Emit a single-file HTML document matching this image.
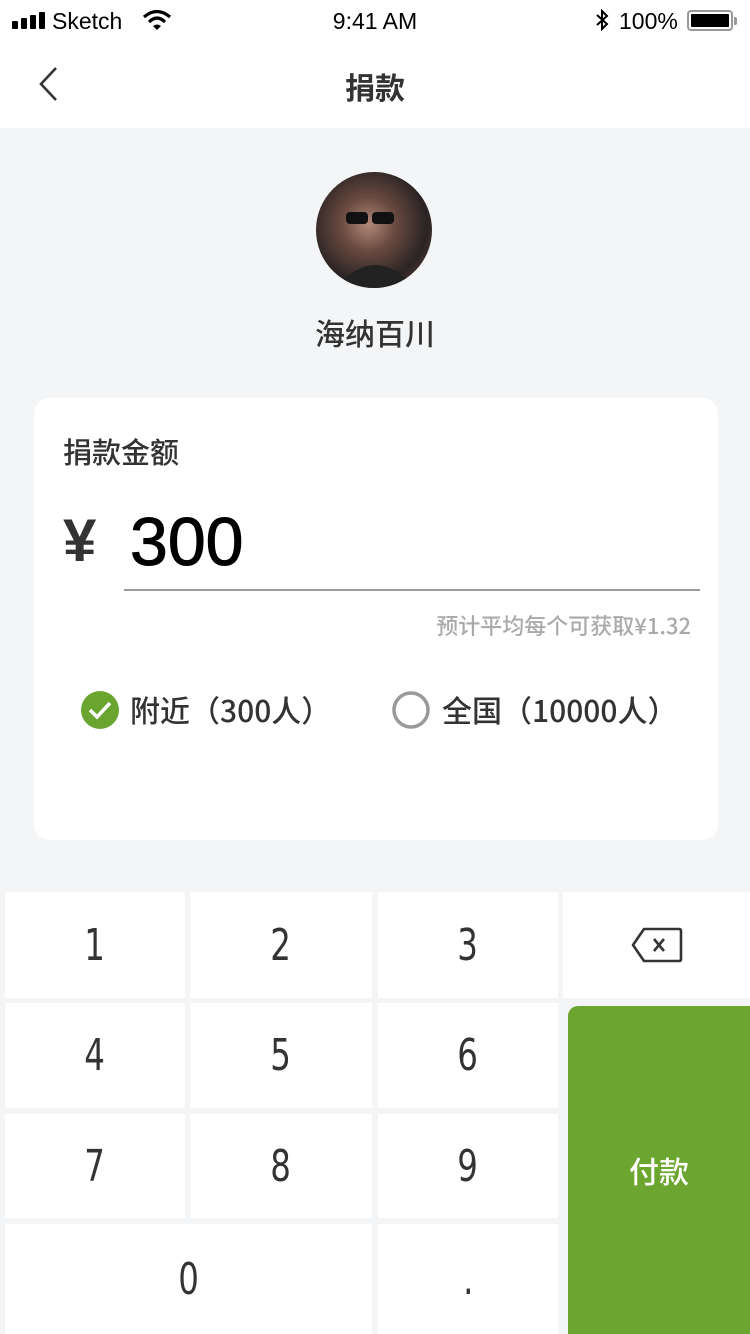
<!DOCTYPE html>
<html><head><meta charset="utf-8">
<style>
*{margin:0;padding:0;box-sizing:border-box}
body{width:750px;height:1334px;background:#f4f5f7;font-family:"Liberation Sans","Noto Sans CJK SC",sans-serif;position:relative;overflow:hidden;color:#333}
.abs{position:absolute}
.top{left:0;top:0;width:750px;height:128px;background:#fff}
.cj{font-family:"Noto Sans CJK SC",sans-serif;font-weight:500}
.key{position:absolute;background:#fff;display:flex;align-items:center;justify-content:center;font-size:44px;color:#333;font-family:"DejaVu Sans Condensed","Liberation Sans",sans-serif}
.key span{display:inline-block;transform:scaleX(0.82)}
</style></head><body>
<div class="abs top"></div>
<div class="abs" style="left:12px;top:12px;display:flex;align-items:flex-end;gap:3px">
<div style="width:6px;height:8px;background:#000;border-radius:1px"></div>
<div style="width:6px;height:11px;background:#000;border-radius:1px"></div>
<div style="width:6px;height:14px;background:#000;border-radius:1px"></div>
<div style="width:6px;height:17px;background:#000;border-radius:1px"></div>
</div>
<div class="abs" style="left:52px;top:8px;font-size:23px;color:#000">Sketch</div>
<svg class="abs" style="left:142px;top:9px" width="30" height="22" viewBox="0 0 30 22"><path d="M2 8 Q15 -3 28 8" stroke="#000" stroke-width="3.2" fill="none"/><path d="M7 13 Q15 5 23 13" stroke="#000" stroke-width="3.2" fill="none"/><path d="M11 17 L15 21 L19 17 Q15 14 11 17Z" fill="#000"/></svg>
<div class="abs" style="left:0;width:750px;top:8px;text-align:center;font-size:23px;color:#000">9:41 AM</div>
<svg class="abs" style="left:595px;top:9px" width="14" height="22" viewBox="0 0 14 22"><path d="M2 6 L12 15 L7 20 V2 L12 7 L2 16" stroke="#000" stroke-width="2" fill="none"/></svg>
<div class="abs" style="left:619px;top:8px;font-size:23px;color:#000">100%</div>
<div class="abs" style="left:687px;top:10px;width:46px;height:21px;border:2px solid #999;border-radius:4px;padding:2px"><div style="width:100%;height:100%;background:#000;border-radius:1px"></div></div>
<div class="abs" style="left:734px;top:17px;width:3px;height:8px;background:#999;border-radius:0 2px 2px 0"></div>
<svg class="abs" style="left:36px;top:66px" width="26" height="36" viewBox="0 0 26 36"><path d="M20 2 L5 18 L20 34" stroke="#333" stroke-width="2.6" fill="none"/></svg>
<div class="abs" style="left:0;width:750px;top:64px;text-align:center;font-size:30px;font-weight:bold;color:#333">捐款</div>
<div class="abs" style="left:316px;top:172px;width:116px;height:116px;border-radius:50%;background:radial-gradient(circle at 45% 45%,#b08878 0,#6a4a40 30%,#2a2424 65%,#7a4a40 100%);overflow:hidden">
<svg width="116" height="116"><rect x="30" y="40" width="22" height="12" rx="4" fill="#111"/><rect x="56" y="40" width="22" height="12" rx="4" fill="#111"/><path d="M20 116 Q58 70 100 116Z" fill="#222"/></svg></div>
<div class="abs cj" style="left:0;width:750px;top:310px;text-align:center;font-size:30px;color:#333">海纳百川</div>
<div class="abs" style="left:34px;top:398px;width:684px;height:442px;background:#fff;border-radius:16px"></div>
<div class="abs cj" style="left:63px;top:430px;font-size:29px;color:#333">捐款金额</div>
<div class="abs" style="left:63px;top:506px;font-size:60px;font-weight:bold;color:#333;line-height:70px">¥</div>
<div class="abs" style="left:130px;top:502px;font-size:68px;color:#000;line-height:80px;-webkit-text-stroke:1px #000">300</div>
<div class="abs" style="left:124px;top:589px;width:576px;height:2px;background:#9a9a9a"></div>
<div class="abs cj" style="right:59px;top:609px;font-size:22px;color:#aaa">预计平均每个可获取¥1.32</div>
<svg class="abs" style="left:80px;top:690px" width="40" height="40"><circle cx="20" cy="20" r="19" fill="#6aa530"/><path d="M10 20 L17 27 L30 13" stroke="#fff" stroke-width="3.5" fill="none"/></svg>
<div class="abs cj" style="left:130px;top:687px;font-size:30px;color:#333">附近（300人）</div>
<svg class="abs" style="left:392px;top:690px" width="40" height="40"><circle cx="19" cy="20" r="17" fill="none" stroke="#999" stroke-width="3.5"/></svg>
<div class="abs cj" style="left:442px;top:687px;font-size:30px;color:#333">全国（10000人）</div>
<div class="key" style="left:5px;top:892px;width:180px;height:106px"><span>1</span></div>
<div class="key" style="left:190px;top:892px;width:182px;height:106px"><span>2</span></div>
<div class="key" style="left:378px;top:892px;width:180px;height:106px"><span>3</span></div>
<div class="key" style="left:563px;top:892px;width:187px;height:106px"><svg width="52" height="36" viewBox="0 0 52 36"><path d="M13 2 H48 Q50 2 50 4 V32 Q50 34 48 34 H13 L2 18Z" stroke="#333" stroke-width="2.6" fill="none" stroke-linejoin="round"/><path d="M23 12 L33 24 M33 12 L23 24" stroke="#333" stroke-width="2.6"/></svg></div>
<div class="key" style="left:5px;top:1003px;width:180px;height:105px"><span>4</span></div>
<div class="key" style="left:190px;top:1003px;width:182px;height:105px"><span>5</span></div>
<div class="key" style="left:378px;top:1003px;width:180px;height:105px"><span>6</span></div>
<div class="key" style="left:5px;top:1114px;width:180px;height:104px"><span>7</span></div>
<div class="key" style="left:190px;top:1114px;width:182px;height:104px"><span>8</span></div>
<div class="key" style="left:378px;top:1114px;width:180px;height:104px"><span>9</span></div>
<div class="key" style="left:5px;top:1224px;width:367px;height:110px"><span>0</span></div>
<div class="key" style="left:378px;top:1224px;width:180px;height:110px"><span>.</span></div>
<div class="abs cj" style="left:568px;top:1006px;width:182px;height:328px;background:#6ca530;border-radius:10px 0 0 0;display:flex;align-items:center;justify-content:center;color:#fff;font-size:30px">付款</div>
</body></html>
